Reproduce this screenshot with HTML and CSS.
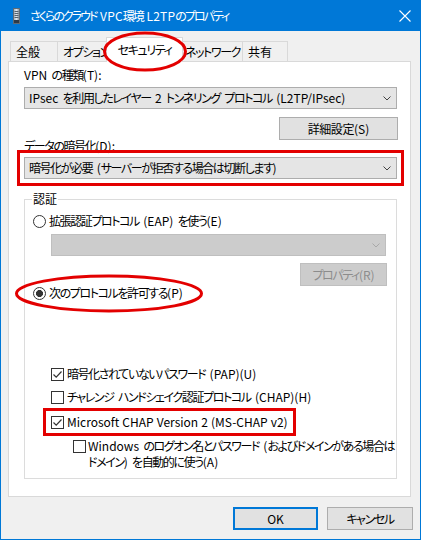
FILE: index.html
```html
<!DOCTYPE html>
<html lang="ja">
<head>
<meta charset="utf-8">
<title>さくらのクラウド VPC環境 L2TPのプロパティ</title>
<link rel="stylesheet" href="styles.css">
</head>
<body>
<div class="window">
  <div class="titlebar">
    <svg class="appicon" width="7" height="16" viewBox="0 0 7 16">
      <defs>
        <linearGradient id="tw" x1="0" x2="1" y1="0" y2="0">
          <stop offset="0" stop-color="#9aa6b2"/>
          <stop offset="0.5" stop-color="#dfe6ec"/>
          <stop offset="1" stop-color="#7d8994"/>
        </linearGradient>
      </defs>
      <rect x="0.5" y="0.5" width="6" height="15" fill="url(#tw)" stroke="#5d6b78"/>
      <path d="M1.5 3.5h4M1.5 5.5h4M1.5 7.5h4M1.5 9.5h4" stroke="#55636f" stroke-width="1"/>
      <rect x="1" y="12" width="5" height="3" fill="#2e3b47"/>
    </svg>
    <span class="title">さくらのクラウド <span class="en">VPC</span>環境 <span class="en">L2TP</span>のプロパティ</span>
    <svg class="close" width="12" height="12" viewBox="0 0 12 12">
      <path d="M0.5 0.5L11.5 11.5M11.5 0.5L0.5 11.5" stroke="#fff" stroke-width="1.1"/>
    </svg>
  </div>

  <div class="tabs">
    <div class="tab t1">全般</div>
    <div class="tab t2">オプション</div>
    <div class="tab t3 selected">セキュリティ</div>
    <div class="tab t4">ネットワーク</div>
    <div class="tab t5">共有</div>
  </div>

  <div class="panel">
    <div class="label l1"><span class="en">VPN</span> の種類<span class="en">(T):</span></div>
    <div class="combo">
      <span class="combo-text"><span class="en">IPsec</span> を利用したレイヤー <span class="en">2</span> トンネリング プロトコル <span class="en">(L2TP/IPsec)</span></span>
      <svg class="chev" width="8" height="5" viewBox="0 0 8 5"><path d="M0.5 0.5L4 4L7.5 0.5" fill="none" stroke="#444" stroke-width="1"/></svg>
    </div>
    <div class="btn adv">詳細設定<span class="en">(S)</span></div>
    <div class="label l2">データの暗号化<span class="en">(D):</span></div>
    <div class="combo marked">
      <span class="combo-text">暗号化が必要 <span class="en">(</span>サーバーが拒否する場合は切断します<span class="en">)</span></span>
      <svg class="chev" width="8" height="5" viewBox="0 0 8 5"><path d="M0.5 0.5L4 4L7.5 0.5" fill="none" stroke="#444" stroke-width="1"/></svg>
    </div>

    <fieldset class="group">
      <legend>認証</legend>
      <div class="opt r1"><span class="radio"></span><span>拡張認証プロトコル <span class="en">(EAP)</span> を使う<span class="en">(E)</span></span></div>
      <div class="combo disabled">
        <svg class="chev" width="8" height="5" viewBox="0 0 8 5"><path d="M0.5 0.5L4 4L7.5 0.5" fill="none" stroke="#a8a8a8" stroke-width="1"/></svg>
      </div>
      <div class="btn disabled props">プロパティ<span class="en">(R)</span></div>
      <div class="opt r2"><span class="radio checked"></span><span>次のプロトコルを許可する<span class="en">(P)</span></span></div>

      <div class="opt c1"><span class="check"><svg width="11" height="11" viewBox="0 0 11 11"><path d="M1.5 5.5L4.2 8.2L9.5 2.5" fill="none" stroke="#333" stroke-width="1.2"/></svg></span><span>暗号化されていないパスワード <span class="en">(PAP)(U)</span></span></div>
      <div class="opt c2"><span class="check"></span><span>チャレンジ ハンドシェイク認証プロトコル <span class="en">(CHAP)(H)</span></span></div>
      <div class="opt c3"><span class="check"><svg width="11" height="11" viewBox="0 0 11 11"><path d="M1.5 5.5L4.2 8.2L9.5 2.5" fill="none" stroke="#333" stroke-width="1.2"/></svg></span><span class="en">Microsoft CHAP Version 2 (MS-CHAP v2)</span></div>
      <div class="opt c4"><span class="check"></span><span class="wrap"><span class="en">Windows</span> のログオン名とパスワード <span class="en">(</span>およびドメインがある場合は<br>ドメイン<span class="en">)</span> を自動的に使う<span class="en">(A)</span></span></div>
    </fieldset>
  </div>

  <div class="footer">
    <div class="btn default ok"><span class="en">OK</span></div>
    <div class="btn cancel">キャンセル</div>
  </div>

  <svg class="annot tab-mark" width="86" height="42" viewBox="0 0 86 42">
    <ellipse cx="43" cy="20.5" rx="40.5" ry="18.5" fill="none" stroke="#e30000" stroke-width="3"/>
  </svg>
  <svg class="annot radio-mark" width="190" height="40" viewBox="0 0 190 40">
    <ellipse cx="95" cy="19.5" rx="92.5" ry="17.5" fill="none" stroke="#e30000" stroke-width="3"/>
  </svg>
</div>
</body>
</html>
```

FILE: styles.css
```css
body {
  margin: 0;
}

.window {
  position: relative;
  width: 421px;
  height: 540px;
  box-sizing: border-box;
  border: 1px solid #0078d7;
  border-top: 0;
  background: #f0f0f0;
  display: flex;
  flex-direction: column;
  font-family: "Noto Sans CJK JP", "Noto Sans", sans-serif;
  font-size: 12px;
  font-feature-settings: "palt";
  letter-spacing: -1.4px;
  word-spacing: 3px;
  color: #000;
  overflow: hidden;
}

/* Latin runs: Segoe-like width */
.en {
  letter-spacing: 0;
  word-spacing: 0.4px;
}

/* title bar */
.titlebar {
  height: 31px;
  flex: none;
  background: #0078d7;
  display: flex;
  align-items: center;
  color: #fff;
}

.appicon {
  margin-left: 12px;
  flex: none;
}

.title {
  margin-left: 10px;
  line-height: 16px;
  white-space: nowrap;
  letter-spacing: -2px;
}

.title .en {
  letter-spacing: 0.2px;
}

.close {
  margin-left: auto;
  margin-right: 9px;
  flex: none;
}

/* tabs */
.tabs {
  position: relative;
  z-index: 2;
  height: 20px;
  flex: none;
  margin-top: 10px;
  padding-left: 9px;
  display: flex;
  align-items: flex-end;
}

.tab {
  box-sizing: border-box;
  height: 20px;
  border: 1px solid #d9d9d9;
  border-bottom: 0;
  background: #f0f0f0;
  display: flex;
  align-items: center;
  white-space: nowrap;
  line-height: 16px;
}

.t1 { width: 48px; padding-left: 5px; letter-spacing: 0; }
.t2 { width: 52px; margin-left: -1px; padding-left: 5px; }
.t3 {
  width: 77px;
  margin-left: -3px;
  justify-content: center;
}
.t4 { width: 62px; margin-left: -2px; padding-left: 3px; }
.t5 { width: 46px; margin-left: -1px; padding-left: 5px; letter-spacing: 0; }

.tab.selected {
  position: relative;
  z-index: 3;
  height: 25px;
  margin-bottom: -1px;
  background: #fff;
}

/* property page */
.panel {
  position: relative;
  z-index: 1;
  height: 436px;
  flex: none;
  box-sizing: border-box;
  margin: 0 9px 0 7px;
  padding: 0 13px 0 15px;
  border: 1px solid #d9d9d9;
  background: #fff;
  display: flex;
  flex-direction: column;
}

.label {
  line-height: 16px;
  height: 16px;
  white-space: nowrap;
}

.l1 { margin-top: 5px; }
.l2 { margin-top: -1px; line-height: 14px; height: 14px; }

.combo {
  box-sizing: border-box;
  height: 22px;
  flex: none;
  border: 1px solid #adadad;
  background: #e5e5e5;
  display: flex;
  align-items: center;
  padding-left: 4px;
  margin-top: 4px;
  white-space: nowrap;
}

.combo-text {
  line-height: 16px;
}

.chev {
  margin-left: auto;
  margin-right: 5px;
  flex: none;
}

.combo.marked {
  outline: 3px solid #e30000;
  outline-offset: 4px;
}

.combo.disabled {
  background: #cccccc;
  border-color: #bfbfbf;
  margin-top: 5px;
  margin-left: 19px;
  width: 335px;
}

.btn {
  box-sizing: border-box;
  height: 23px;
  flex: none;
  border: 1px solid #adadad;
  background: #e1e1e1;
  display: flex;
  align-items: center;
  justify-content: center;
  white-space: nowrap;
  line-height: 16px;
}

.btn.adv {
  width: 119px;
  align-self: flex-end;
  margin-top: 8px;
  margin-right: -1px;
  letter-spacing: -0.4px;
}

.btn.disabled {
  background: #cccccc;
  border-color: #bfbfbf;
  color: #8c8c8c;
}

.btn.props {
  width: 87px;
  align-self: flex-end;
  margin-top: 7px;
  margin-right: 2px;
}

/* authentication group */
.group {
  margin: 12px 0 0 0;
  padding: 0 7px 8px 7px;
  border: 1px solid #dcdcdc;
  min-width: 0;
  display: flex;
  flex-direction: column;
}

.group legend {
  padding: 0 1px;
  line-height: 16px;
  letter-spacing: 0;
}

.opt {
  display: flex;
  align-items: center;
  line-height: 16px;
  white-space: nowrap;
}

.radio {
  box-sizing: border-box;
  width: 13px;
  height: 13px;
  flex: none;
  border: 1px solid #333;
  border-radius: 50%;
  background: #fff;
  margin-right: 3px;
}

.radio.checked {
  background: radial-gradient(circle, #333 0 3.2px, #fff 3.8px);
}

.check {
  box-sizing: border-box;
  width: 13px;
  height: 13px;
  flex: none;
  border: 1px solid #333;
  background: #fff;
  margin-right: 3px;
  display: flex;
}

.r1 { margin-top: 6px; margin-left: 1px; height: 16px; }
.r2 { margin-top: -1px; margin-left: 1px; height: 16px; }

.c1 { margin-top: 65px; margin-left: 19px; height: 16px; }
.c2 { margin-top: 7px; margin-left: 19px; height: 16px; }
.c3 {
  margin-top: 9px;
  margin-left: 17px;
  padding: 0 2px;
  height: 16px;
  align-self: flex-start;
  outline: 3px solid #e30000;
  outline-offset: 3px;
}
.c4 {
  margin-top: 8px;
  margin-left: 41px;
  align-items: flex-start;
}
.c4 .check {
  margin-top: 2px;
  margin-right: 2px;
}
.c4 .wrap {
  line-height: 16px;
}

/* dialog buttons */
.footer {
  display: flex;
  justify-content: flex-end;
  gap: 9px;
  margin-top: 10px;
  padding-right: 7px;
}

.btn.ok { width: 85px; }
.btn.cancel { width: 86px; }

.btn.default {
  border: 2px solid #0078d7;
}

/* red annotation marks drawn over the screenshot */
.annot {
  position: absolute;
  z-index: 5;
  pointer-events: none;
}

.tab-mark {
  left: 101px;
  top: 31px;
}

.radio-mark {
  left: 13px;
  top: 274px;
}
```
